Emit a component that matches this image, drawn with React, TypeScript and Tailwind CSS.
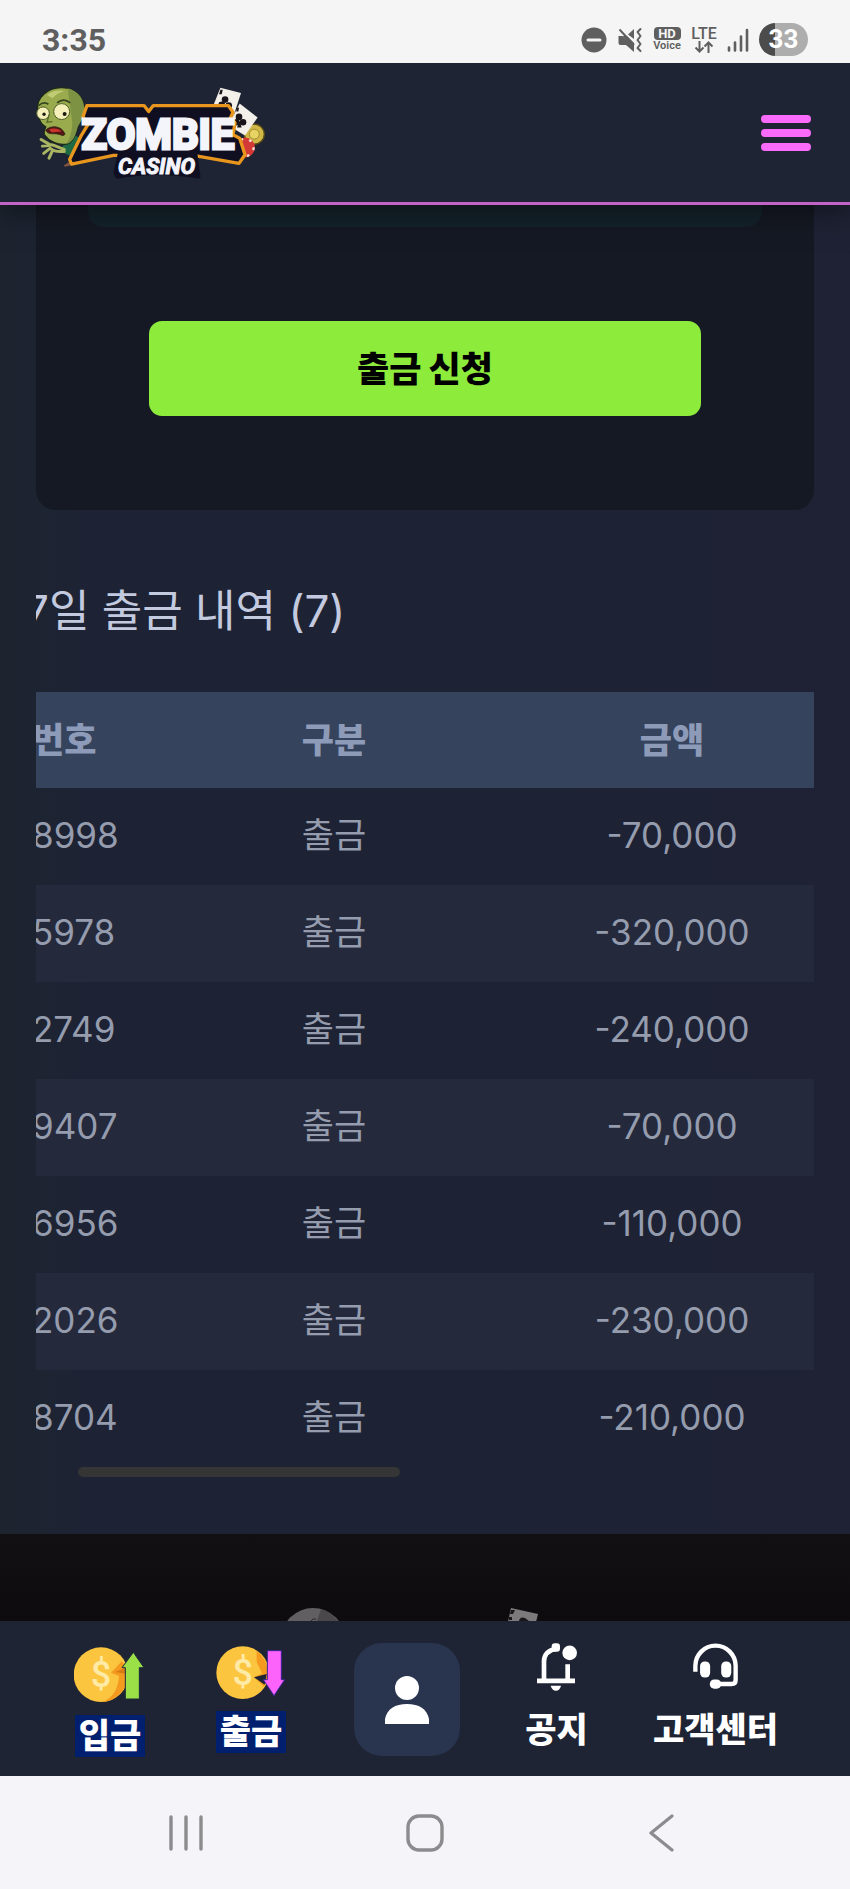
const withdrawals = [
  { id: "8998", type: "출금", amount: "-70,000" },
  { id: "5978", type: "출금", amount: "-320,000" },
  { id: "2749", type: "출금", amount: "-240,000" },
  { id: "9407", type: "출금", amount: "-70,000" },
  { id: "6956", type: "출금", amount: "-110,000" },
  { id: "2026", type: "출금", amount: "-230,000" },
  { id: "8704", type: "출금", amount: "-210,000" },
];

function StatusBar() {
  return (
    <div className="relative z-20 flex h-[63px] items-center justify-between bg-[#f5f5f6] px-[42px] pt-4 font-['Roboto',sans-serif] text-[#5f5f5f]">
      <span className="text-[32px] leading-8 font-bold">3:35</span>
      <div className="flex items-center gap-[10px]">
        <svg className="h-[26px] w-[26px]" viewBox="0 0 26 26">
          <circle cx="13" cy="13" r="12.5" fill="#5f5f5f" />
          <path d="M7 13h12" stroke="#f5f5f6" strokeWidth="3" strokeLinecap="round" />
        </svg>
        {/* Muted speaker with vibration waves */}
        <svg className="h-[26px] w-[26px]" viewBox="0 0 26 26" fill="#5f5f5f">
          <path d="M11 7.500 17 2v10z" />
          <path d="M1.500 9H5l12 11v5L9 18H3.500a2 2 0 0 1-2-2z" />
          <path d="M5 9h5l7 7v6z" />
          <g fill="none" stroke="#5f5f5f" strokeWidth="2">
            <path d="M2.500 2.500 17 18" />
            <path
              d="m23.500 2-3 3 3 4-3 4 3 4-3 4 3 3"
              strokeLinejoin="round"
              strokeLinecap="round"
            />
          </g>
        </svg>
        <div className="flex w-7 flex-col items-center">
          <span className="h-[13px] w-[27px] rounded bg-[#5f5f5f] text-center text-[13px] leading-[13px] font-bold text-[#f5f5f6]">
            HD
          </span>
          <span className="text-[11px] leading-[12px] font-semibold">Voice</span>
        </div>
        <div className="flex w-[26px] flex-col items-center">
          <span className="text-[16px] leading-[14px] font-medium">LTE</span>
          <svg
            className="h-3 w-5"
            viewBox="0 0 20 12"
            fill="none"
            stroke="#5f5f5f"
            strokeWidth="2"
          >
            <path d="M5.500 0v10.500M1.500 6.500l4 4 4-4M14.500 12V1.500M10.500 5.500l4-4 4 4" />
          </svg>
        </div>
        <svg
          className="h-6 w-[22px]"
          viewBox="0 0 22 24"
          stroke="#5f5f5f"
          strokeWidth="2.6"
          strokeLinecap="round"
        >
          <path d="M2 19.500v3M8 14.500v8M14 8.500v14M20 2v20.500" />
        </svg>
        <div className="h-[33px] w-[49px] rounded-full bg-linear-to-r from-[#4c4c4c] from-33% to-[#adadad] to-33% text-center text-[26px] leading-[33px] font-bold text-white">
          33
        </div>
      </div>
    </div>
  );
}

function Logo() {
  return (
    <svg className="h-[93px] w-[230px]" viewBox="45 45 690 280" role="img" aria-label="Zombie Casino">
      {/* Zombie */}
      <path d="M140 200c18-10 40-6 48 14l-20 40c-22 4-40-6-44-20z" fill="#1d6a44" />
      <path
        d="M52 118C46 80 84 48 126 50c44 2 68 34 66 70-1 26-14 34-20 50-6 24-14 46-34 50-26 4-52-8-66-28-4-8 2-16 4-24-14-6-22-24-24-50z"
        fill="#9aab4d"
        stroke="#1b2718"
        strokeWidth="4"
      />
      <path d="M142 52c34 8 52 36 50 68-1 24-14 34-20 50-6 24-14 46-34 50 14-24 18-44 18-66z" fill="#7d9343" />
      <path d="M80 72c14-12 34-16 52-12-14 4-26 10-36 22z" fill="#c1cb73" />
      <path d="M54 104c10-8 22-10 30-4M110 96c12-10 26-12 40 0" fill="none" stroke="#36451f" strokeWidth="5" />
      <circle cx="68" cy="127" r="19" fill="#f5efb9" stroke="#4d5c26" strokeWidth="3" />
      <circle cx="124" cy="122" r="24" fill="#f5efb9" stroke="#4d5c26" strokeWidth="3" />
      <circle cx="71" cy="130" r="5" fill="#1b1b12" />
      <circle cx="133" cy="129" r="6" fill="#1b1b12" />
      <path d="M86 132l-6 22 16-2" fill="none" stroke="#56682b" strokeWidth="4" />
      <path d="M76 178c12-14 48-16 58 12-6 8-10 2-20 0-16-4-28 4-38-12z" fill="#571414" stroke="#36301a" strokeWidth="3" />
      <path d="M86 176c12-6 30-4 38 6l-30 2z" fill="#c9352d" />
      <path
        d="M62 206l24 14M66 226l20-2M70 248l20-16M86 262l10-22M84 222c12-4 22 6 48 14M92 234c8 8 18 10 40 8"
        stroke="#a9b562"
        strokeWidth="9"
        strokeLinecap="round"
        fill="none"
      />
      <path d="M130 284l34-22 6 18-36 8z" fill="#7d5242" />
      {/* Cards and chips */}
      <circle cx="704" cy="190" r="30" fill="#cfb847" stroke="#5d4c14" strokeWidth="4" />
      <circle cx="704" cy="190" r="15" fill="#e8d465" stroke="#a28a2b" strokeWidth="3" />
      <path d="M602 50l62 16-24 74-66-20z" fill="#f3efe9" />
      <path d="M660 98l54 42-38 54-50-30z" fill="#f3efe9" />
      <g fill="#17151a">
        <circle cx="616" cy="86" r="10" />
        <circle cx="606" cy="102" r="10" />
        <circle cx="627" cy="104" r="10" />
        <path d="M614 98l-6 20h14z" />
        <circle cx="658" cy="138" r="10" />
        <circle cx="650" cy="154" r="10" />
        <circle cx="670" cy="154" r="10" />
        <path d="M660 150l-8 20h14z" />
        <path d="M602 56h7l-3 14h-8zM650 112l8-2-2 12h-6z" />
      </g>
      <circle cx="676" cy="230" r="30" fill="#d43a35" />
      <circle cx="676" cy="230" r="26" fill="none" stroke="#f6dfd5" strokeWidth="7" strokeDasharray="8 19" />
      {/* Wordmark plate */}
      <path
        d="M200 104H372l14 18 14-18H626l14 20-8 18 14 14-6 36 20 10 16 50-18 26-138-24H280l-126 26-6-14 34-70 22-36-16-22z"
        fill="#100f22"
        stroke="#e8961e"
        strokeWidth="10"
        strokeLinejoin="round"
      />
      <path d="M300 244h226l10 74c-80-14-170-14-244 0l-6-12z" fill="#100f22" stroke="#100f22" strokeWidth="12" strokeLinejoin="round" />
      <g
        fill="#f4f4fb"
        stroke="#f4f4fb"
        textAnchor="middle"
        className="font-['Roboto',sans-serif] font-bold"
      >
        <text x="414" y="236" fontSize="126" strokeWidth="9">
          ZOMBIE
        </text>
        <text x="410" y="309" fontSize="66" strokeWidth="3" fontStyle="italic">
          CASINO
        </text>
      </g>
    </svg>
  );
}

function Header() {
  return (
    <header className="relative z-10 flex h-[142px] items-center justify-between border-b-3 border-[#c263c8] bg-[#1e2433] pr-[39px] pl-[35px] shadow-[0_4px_30px_rgba(0,0,0,0.5)]">
      <a href="#home">
        <Logo />
      </a>
      <button type="button" aria-label="메뉴" className="flex w-[50px] flex-col gap-[6px]">
        <span className="h-2 rounded-full bg-[#fb6bfb]" />
        <span className="h-2 rounded-full bg-[#fb6bfb]" />
        <span className="h-2 rounded-full bg-[#fb6bfb]" />
      </button>
    </header>
  );
}

function History() {
  return (
    <section className="overflow-hidden">
      {/* The list is scrolled a little to the right */}
      <div className="-ml-4 w-[822px]">
        <h2 className="pt-[71px] pb-[51px] pl-1 text-[44px] leading-[60px] text-[#c3cadf]">
          7일 출금 내역 (7)
        </h2>
        <table className="w-full table-fixed text-[35px] leading-[48px]">
          <colgroup>
            <col className="w-[146px]" />
            <col className="w-[336px]" />
            <col className="w-[340px]" />
          </colgroup>
          <thead>
            <tr className="h-24 bg-[#36435d] text-[#8d9bb8]">
              <th className="pl-3 text-left font-black">번호</th>
              <th className="font-black">구분</th>
              <th className="font-black">금액</th>
            </tr>
          </thead>
          <tbody className="text-center text-[#959cae]">
            {withdrawals.map((row) => (
              <tr key={row.id} className="h-[97px] even:bg-[#242a3c]">
                <td className="pb-1 pl-3 text-left">{row.id}</td>
                <td className="pb-1">{row.type}</td>
                <td className="pb-1">{row.amount}</td>
              </tr>
            ))}
          </tbody>
        </table>
      </div>
      <div className="ml-[42px] h-[10px] w-[322px] rounded-full bg-[#353535]" />
    </section>
  );
}

function DepositIcon() {
  return (
    <svg className="h-[60px] w-[72px]" viewBox="222 129 216 180">
      <circle cx="303" cy="224" r="82" fill="#fcc53f" />
      <path d="M385 206c4 50-26 96-78 100 34-12 48-44 50-78l-24-10 32-34z" fill="#f39a1f" />
      <path d="M385 200l-40 16 34 6z" fill="#d97a12" />
      <text x="303" y="262" fontSize="108" textAnchor="middle" fill="#ffeaa6" className="font-['Roboto',sans-serif] font-medium">
        $
      </text>
      <path d="M400 157l32 46h-14v94h-42v-94h-10z" fill="#9ae046" stroke="#1e2a3c" strokeWidth="3" />
    </svg>
  );
}

function WithdrawIcon() {
  return (
    <svg className="h-14 w-[72px]" viewBox="645 129 216 168">
      <circle cx="728" cy="218" r="79" fill="#fcc53f" />
      <path d="M770 152c34 26 42 70 22 108l-30-28 24-12-16-34z" fill="#f39a1f" />
      <path d="M800 222l-38 10 32 22z" fill="#1e2433" />
      <text x="728" y="256" fontSize="108" textAnchor="middle" fill="#ffeaa6" className="font-['Roboto',sans-serif] font-medium">
        $
      </text>
      <path d="M802 152h42v87h10l-32 48-32-48h12z" fill="#fb63fb" stroke="#3b2496" strokeWidth="3" />
    </svg>
  );
}

function BottomNav() {
  return (
    <nav className="flex h-[155px] items-start justify-between bg-[#1e2433] px-[72px] pt-[22px] text-[34px] leading-[42px] font-black text-white">
      <a href="#deposit" className="flex w-[76px] flex-col items-center gap-3">
        <DepositIcon />
        <span className="bg-[#00206f] px-1">입금</span>
      </a>
      <a href="#withdraw" className="flex w-[76px] flex-col items-center gap-3">
        <WithdrawIcon />
        <span className="bg-[#00206f] px-1">출금</span>
      </a>
      <a
        href="#my"
        aria-label="내 정보"
        className="flex h-[113px] w-[106px] items-center justify-center rounded-[28px] bg-[#29344f]"
      >
        <svg className="h-12 w-11" viewBox="0 0 44 48" fill="#ffffff">
          <circle cx="22" cy="12" r="12" />
          <path d="M0 48v-5C2 33 10 28 22 28s20 5 22 15v5z" />
        </svg>
      </a>
      <a href="#notice" className="flex flex-col items-center gap-[18px]">
        <svg className="h-12 w-10" viewBox="333 132 120 143" fill="#ffffff">
          <path d="M354 240v-53c0-22 14-34 38-39" fill="none" stroke="#ffffff" strokeWidth="14" />
          <path d="M425 195v45M333 245h114" stroke="#ffffff" strokeWidth="14" />
          <rect x="377" y="132" width="25" height="26" rx="9" />
          <circle cx="431" cy="161" r="22" />
          <path d="M374 260h31c-2 9-8 15-15 15s-14-6-16-15z" />
        </svg>
        <span>공지</span>
      </a>
      <a href="#support" className="flex flex-col items-center gap-[18px]">
        <svg className="h-12 w-[45px]" viewBox="805 132 134 143" fill="#ffffff">
          <path
            d="M812 218v-18a60 60 0 0 1 120 0v42q0 12-12 12h-46"
            fill="none"
            stroke="#ffffff"
            strokeWidth="13"
          />
          <rect x="826" y="187" width="30" height="48" rx="14" />
          <rect x="889" y="187" width="30" height="48" rx="14" />
          <rect x="855" y="241" width="34" height="27" rx="13" />
        </svg>
        <span>고객센터</span>
      </a>
    </nav>
  );
}

function SystemBar() {
  return (
    <div className="flex h-[113px] items-center justify-between bg-[#f5f4f8] px-[168px]">
      <button type="button" aria-label="최근 앱">
        <svg className="h-9 w-9" viewBox="0 0 36 36" stroke="#8c8b8e" strokeWidth="3.4" strokeLinecap="round">
          <path d="M3 2v32M18 2v32M33 2v32" />
        </svg>
      </button>
      <button type="button" aria-label="홈">
        <svg className="h-[38px] w-[38px]" viewBox="0 0 38 38" fill="none" stroke="#8c8b8e" strokeWidth="3.4">
          <rect x="2" y="2" width="34" height="34" rx="11" />
        </svg>
      </button>
      <button type="button" aria-label="뒤로">
        <svg
          className="h-[38px] w-9"
          viewBox="0 0 36 38"
          fill="none"
          stroke="#8c8b8e"
          strokeWidth="3.2"
          strokeLinecap="round"
          strokeLinejoin="round"
        >
          <path d="M26 2 5 19l21 17" />
        </svg>
      </button>
    </div>
  );
}

export default function App() {
  return (
    <div className="overflow-hidden bg-[#1d2333] font-['Inter','Noto_Sans_CJK_KR',sans-serif]">
      <StatusBar />
      <Header />
      <main className="bg-linear-to-r from-[#1d242f] via-[#1d2334] via-10% to-[#1e2234] px-9 pb-[57px]">
        {/* Withdrawal form */}
        <section className="rounded-b-[20px] bg-[#151923] pb-[94px]">
          <div className="mx-[52px] h-[22px] rounded-b-2xl bg-[#14222b]" />
          <div className="mt-[94px] px-[113px]">
            <button
              type="button"
              className="h-[95px] w-full rounded-[13px] bg-[#8deb3b] text-[35px] leading-[48px] font-black text-black"
            >
              출금 신청
            </button>
          </div>
        </section>
        <History />
      </main>
      <footer className="flex h-[87px] items-end justify-center bg-linear-to-b from-[#131013] to-[#0e0b0e]">
        <svg className="h-[13px] w-[276px]" viewBox="0 0 276 13">
          <circle cx="26" cy="32" r="32" fill="#625f62" />
          <path d="M34 1q10 3 17 12H30z" fill="#4b484b" />
          <path d="M24 13l2-2h3" fill="none" stroke="#2b282b" />
          <path d="M224 0l27 6-3 12h-28z" fill="#7d7a7c" />
          <path d="M224 2h4l-2 4h-3zM222 9h3v3h-3zM232 13q1-5 6-3l4 3z" fill="#1a171a" />
        </svg>
      </footer>
      <BottomNav />
      <SystemBar />
    </div>
  );
}
